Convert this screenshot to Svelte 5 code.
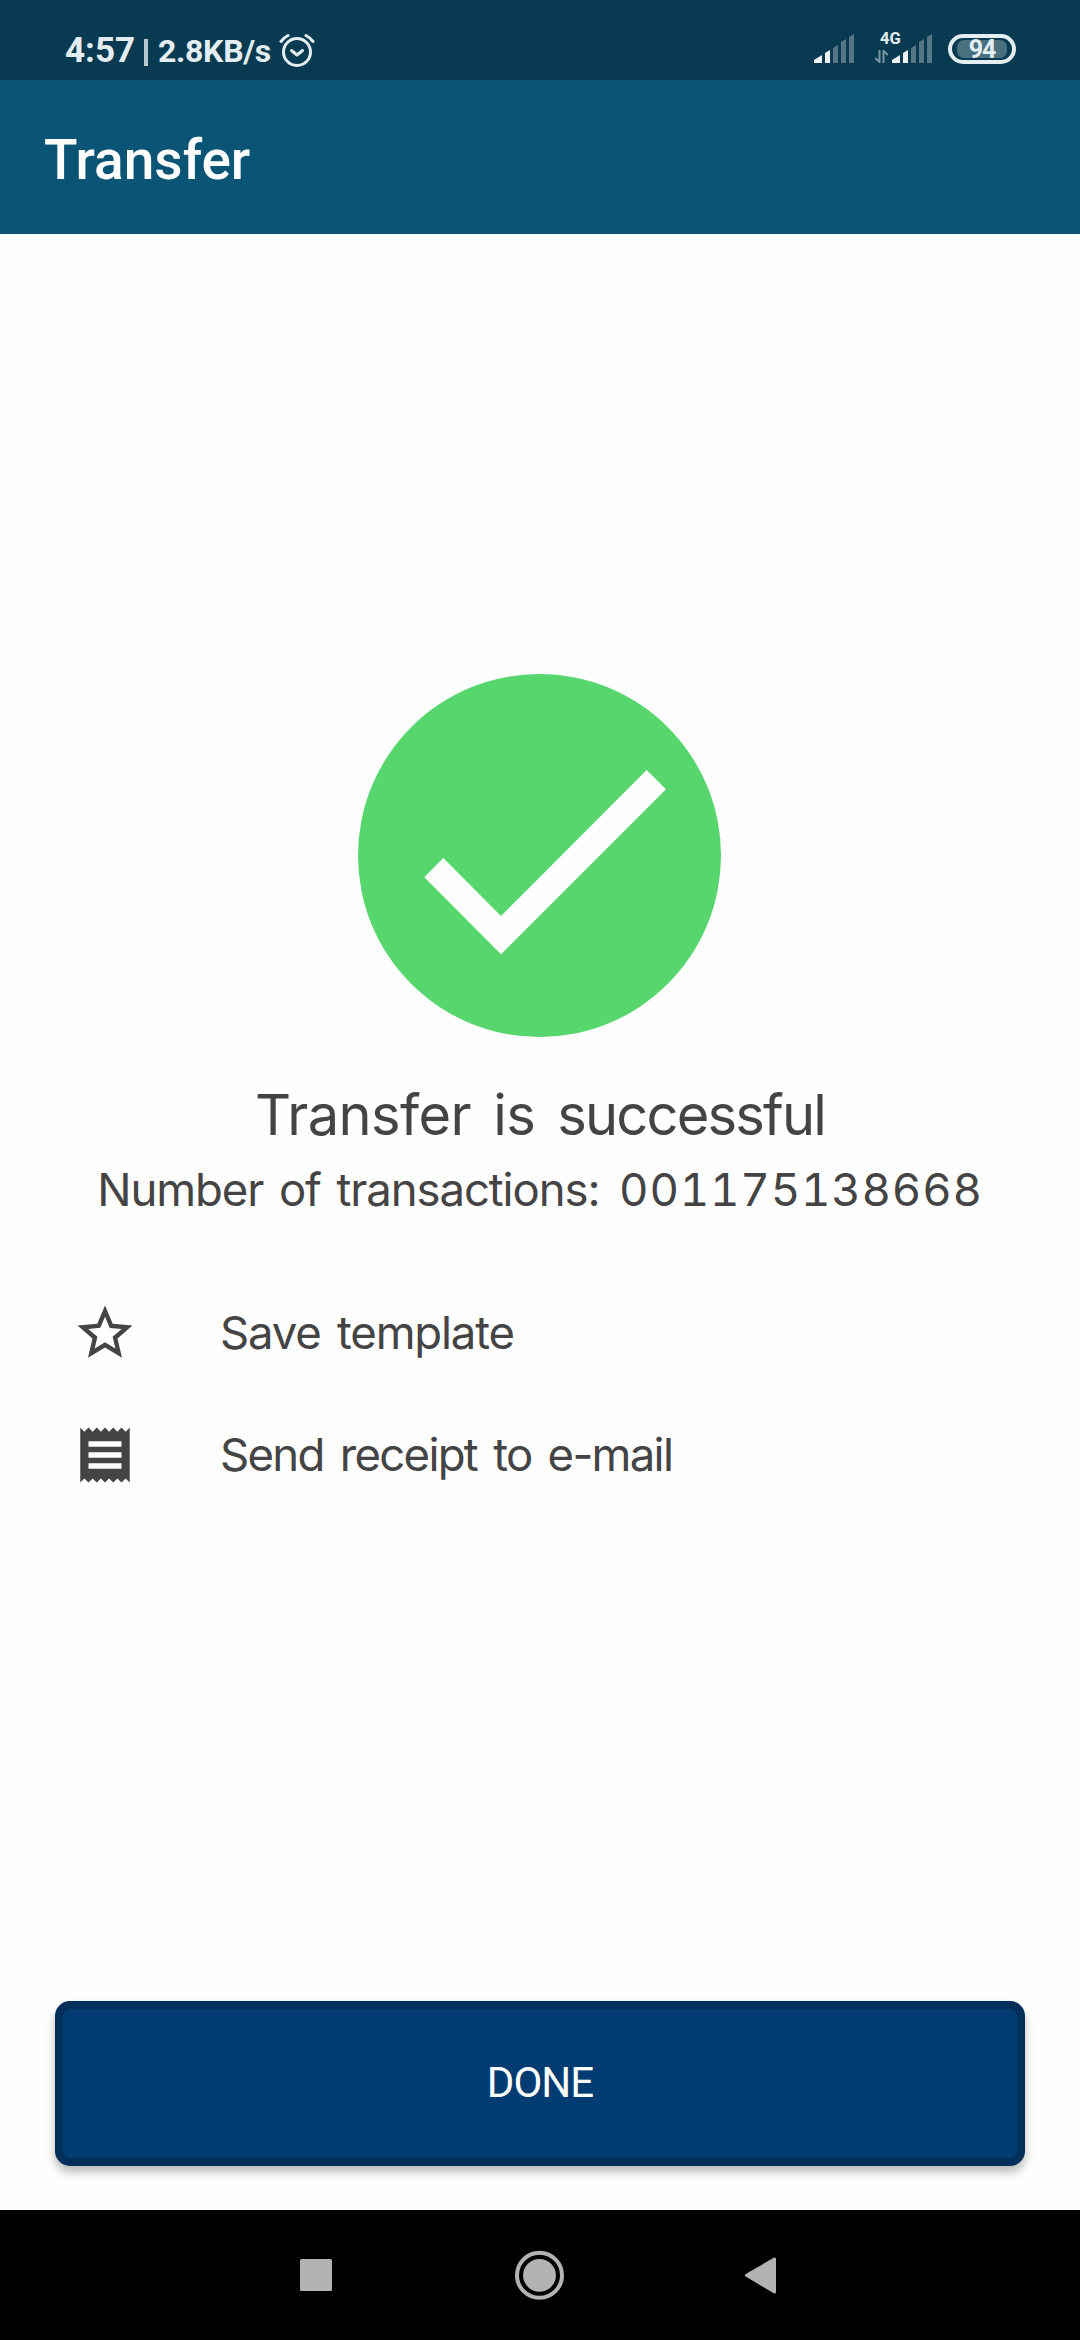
<script lang="ts">
  const BAR_TOPS = [21, 16, 11, 5, 0];

  const actions = [
    {
      id: "template",
      label: "Save template",
      icon: "M22 9.24l-7.19-.62L12 2 9.19 8.63 2 9.24l5.46 4.73L5.82 21 12 17.27 18.18 21l-1.63-7.03L22 9.24zM12 15.4l-3.76 2.27 1-4.28-3.32-2.88 4.38-.38L12 6.1l1.71 4.04 4.38.38-3.32 2.88 1 4.28L12 15.4z",
    },
    {
      id: "receipt",
      label: "Send receipt to e-mail",
      icon: "M18 17H6v-2h12v2zm0-4H6v-2h12v2zm0-4H6V7h12v2zM3 22l1.5-1.5L6 22l1.5-1.5L9 22l1.5-1.5L12 22l1.5-1.5L15 22l1.5-1.5L18 22l1.5-1.5L21 22V2l-1.5 1.5L18 2l-1.5 1.5L15 2l-1.5 1.5L12 2l-1.5 1.5L9 2 7.5 3.5 6 2 4.5 3.5 3 2v20z",
    },
  ];

  // The first bar is wider than the rest, so its x does not follow the step.
  function barPath(i: number) {
    const x = i === 0 ? 0 : 3 + i * 8;
    const w = i === 0 ? 8 : 5;
    const top = BAR_TOPS[i];
    return `M${x} ${top + (i === 0 ? 5 : 3)}L${x + w} ${top}V29H${x}Z`;
  }
</script>

{#snippet signal()}
  <svg class="signal" width="40" height="29" viewBox="0 0 40 29">
    {#each BAR_TOPS as _, i (i)}
      <path d={barPath(i)} class:dim={i > 1} />
    {/each}
  </svg>
{/snippet}

<div class="screen">
  <div class="status">
    <span class="clock">4:57</span>
    <span class="divider"></span>
    <span class="speed">2.8KB/s</span>
    <svg class="alarm" width="36" height="36" viewBox="0 0 36 36">
      <circle cx="18" cy="19" r="13.5" />
      <path d="M2 8.5Q5 4.5 9 2.5M27 2.5Q31 4.5 34 8.5" />
      <path d="M12.5 17.5L18 22L23.5 17.5" />
    </svg>

    <div class="radios">
      {@render signal()}
      <div class="mobile">
        <span class="network">4G</span>
        <div class="mobile-row">
          <svg class="arrows" width="13" height="13" viewBox="0 0 13 13">
            <path d="M4.5 0V12L0 8M8.5 13V1L13 5" />
          </svg>
          {@render signal()}
        </div>
      </div>
      <div class="battery"><span>94</span></div>
    </div>
  </div>

  <header><h1>Transfer</h1></header>

  <main>
    <svg class="success" width="363" height="363" viewBox="0 0 363 363">
      <circle cx="181.5" cy="181.5" r="181.5" />
      <path d="M66.3 203.3L85.3 184L143 242L288.7 96L308 115.3L143 280.3Z" />
    </svg>
    <h2>Transfer is <span class="outcome">successful</span></h2>
    <p class="number">Number of transactions: <span class="digits">001175138668</span></p>

    <ul>
      {#each actions as action (action.id)}
        <li>
          <svg width="66" height="66" viewBox="0 0 24 24"><path d={action.icon} /></svg>
          <span class="label {action.id}">{action.label}</span>
        </li>
      {/each}
    </ul>

    <button type="button">DONE</button>
  </main>

  <nav>
    <svg width="480" height="50" viewBox="0 0 480 50">
      <rect x="0" y="9" width="32" height="32" rx="1.5" />
      <circle class="ring" cx="239.5" cy="25.3" r="22.5" />
      <circle cx="239.5" cy="25.3" r="16.4" />
      <path class="back" d="M446.5 25.3L474.5 9V42Z" />
    </svg>
  </nav>
</div>

<style>
  :global(body) {
    margin: 0;
    background: #fefefe;
  }

  .screen {
    display: flex;
    flex-direction: column;
    width: 1080px;
    height: 2340px;
    overflow: hidden;
    color: #444;
    font-family: Inter, "Liberation Sans", sans-serif;
  }

  .status {
    display: flex;
    align-items: flex-start;
    box-sizing: border-box;
    height: 80px;
    padding: 33px 64px 0 65px;
    background: #083b52;
    color: #e4edf1;
    font-family: Roboto, sans-serif;
    font-weight: 700;
    white-space: nowrap;
  }

  .clock {
    flex: none;
    width: 79px;
    font-size: 35px;
    line-height: 35px;
  }

  .divider {
    flex: none;
    width: 4px;
    height: 27px;
    margin: 6px 10px 0 0;
    background: #b9c7ce;
  }

  .speed {
    flex: none;
    width: 121px;
    font-size: 32px;
    line-height: 36px;
    letter-spacing: -0.3px;
  }

  .alarm {
    fill: none;
    stroke: currentColor;
    stroke-width: 3;
    stroke-linecap: round;
    stroke-linejoin: round;
  }

  .radios {
    display: flex;
    align-items: flex-start;
    margin-left: auto;
  }

  .signal {
    display: block;
    margin-top: 1px;
    fill: #edf3f5;
  }

  .signal .dim {
    fill: #557686;
  }

  .mobile {
    width: 57px;
    margin: 0 16px 0 21px;
  }

  .network {
    display: block;
    height: 0;
    margin-left: 5px;
    font-size: 16.5px;
    line-height: 11px;
  }

  .mobile-row {
    display: flex;
    align-items: flex-end;
    gap: 4px;
  }

  .arrows {
    fill: none;
    stroke: #7795a2;
    stroke-width: 2;
  }

  .battery {
    box-sizing: border-box;
    width: 68px;
    height: 30px;
    margin-top: 1px;
    padding: 2px 5px;
    border: 4px solid #e4edf1;
    border-radius: 15px;
  }

  .battery span {
    display: block;
    height: 18px;
    border-radius: 7px;
    background: #48707f;
    font-size: 25px;
    line-height: 20px;
    letter-spacing: -1px;
    text-align: center;
  }

  header {
    box-sizing: border-box;
    height: 154px;
    padding: 48px 44px;
    background: #0a5576;
  }

  h1 {
    margin: 0;
    color: #fff;
    font: 500 55px/64px Roboto, sans-serif;
  }

  main {
    display: flex;
    flex: 1;
    flex-direction: column;
    align-items: center;
    padding: 440px 55px 44px;
  }

  .success {
    flex: none;
    margin-right: 1px;
    fill: #56d66d;
  }

  .success path {
    fill: #fefefe;
  }

  h2 {
    margin: 43px 0 0;
    font-size: 56px;
    font-weight: 400;
    line-height: 70px;
    letter-spacing: -0.6px;
    word-spacing: 7px;
    white-space: nowrap;
  }

  .outcome {
    letter-spacing: -1.8px;
  }

  .number {
    margin: 10px 0 0;
    font-size: 45.5px;
    line-height: 60px;
    letter-spacing: -1.1px;
    word-spacing: 4px;
    white-space: nowrap;
  }

  .digits {
    margin-left: 4px;
    font-variant-numeric: tabular-nums;
    letter-spacing: 0.8px;
  }

  ul {
    align-self: stretch;
    margin: 52px 0 0;
    padding: 0 0 0 17px;
    list-style: none;
  }

  li {
    display: flex;
    align-items: center;
    gap: 82px;
    height: 122px;
    font-size: 45.5px;
    word-spacing: 5px;
    white-space: nowrap;
  }

  li svg {
    fill: #444;
  }

  .label {
    padding-bottom: 2px;
    letter-spacing: -1.2px;
  }

  .label.receipt {
    letter-spacing: -1.7px;
  }

  button {
    box-sizing: border-box;
    width: 970px;
    height: 165px;
    margin-top: auto;
    padding: 0 0 2px;
    border: 8px solid #002f59;
    border-radius: 15px;
    background: #003c71;
    box-shadow: 0 6px 10px rgba(0, 0, 0, 0.28);
    color: #fff;
    font: 400 42px/50px Roboto, sans-serif;
    letter-spacing: -1px;
  }

  nav {
    display: flex;
    height: 130px;
    padding-left: 300px;
    align-items: center;
    background: #000;
  }

  nav svg {
    fill: #b3b3b3;
  }

  nav .ring {
    fill: none;
    stroke: #b3b3b3;
    stroke-width: 4;
  }

  nav .back {
    stroke: #b3b3b3;
    stroke-width: 3;
    stroke-linejoin: round;
  }
</style>
